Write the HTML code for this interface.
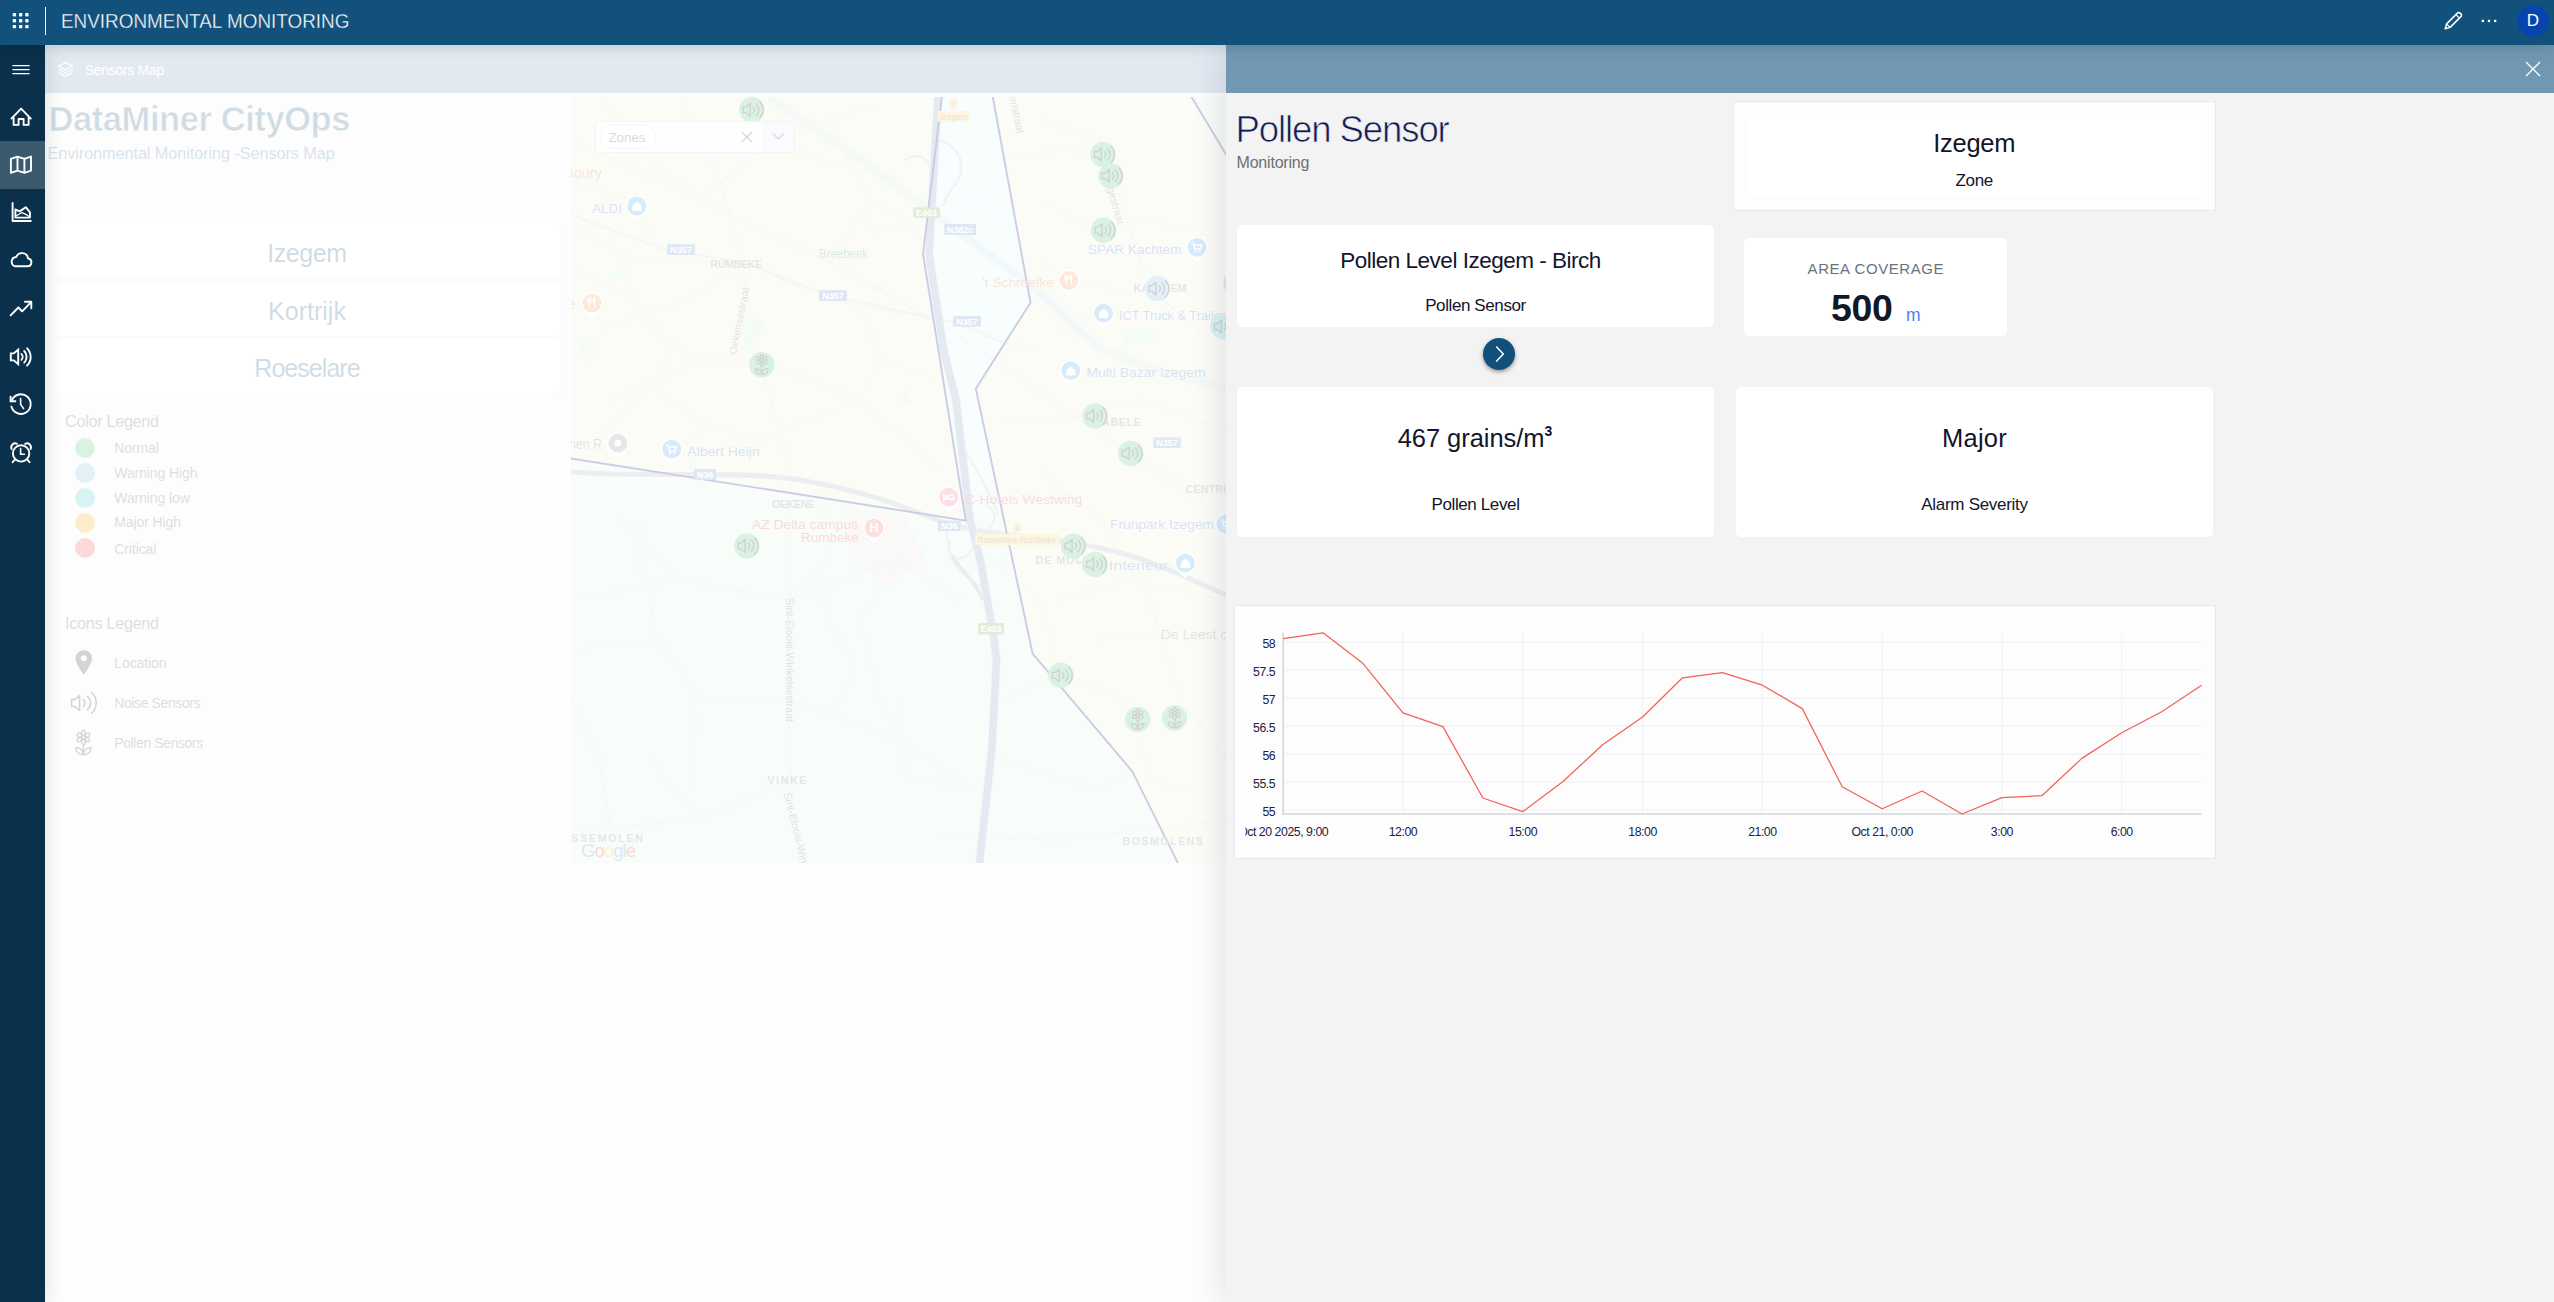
<!DOCTYPE html>
<html lang="en">
<head>
<meta charset="utf-8">
<title>Environmental Monitoring</title>
<style>
*{box-sizing:border-box}
html,body{margin:0;padding:0}
body{width:2554px;height:1302px;position:relative;overflow:hidden;background:#fff;font-family:"Liberation Sans",sans-serif;color:#14142b}
.abs{position:absolute}
/* top bar */
#topbar{position:absolute;left:0;top:0;width:2554px;height:45px;background:#11517c;z-index:50;box-shadow:0 0 15px rgba(0,0,0,.2)}
#topbar .sep{position:absolute;left:45px;top:7px;width:1px;height:28px;background:#fff}
#topbar .title{position:absolute;left:60.6px;top:0;height:45px;line-height:42.4px;font-size:20.3px;color:#fff;font-weight:400;letter-spacing:0;white-space:nowrap;transform:scaleX(.932);transform-origin:0 50%;-webkit-text-stroke:.35px #11517c}
#avatar{position:absolute;left:2517px;top:5px;width:32px;height:32px;border-radius:50%;background:#0645ad;color:#fff;font-size:17px;line-height:32px;text-align:center}
/* sidebar */
#sidebar{position:absolute;left:0;top:45px;width:45px;height:1257px;background:#0a304b;z-index:40;box-shadow:0 0 20px rgba(0,0,0,.125)}
#sidebar .sel{position:absolute;left:0;top:96px;width:45px;height:48px;background:#3c5a6e}
#sidebar svg{position:absolute;left:0;top:0}
/* page */
#page{position:absolute;left:45px;top:45px;width:2509px;height:1257px;background:#f6f6f6;z-index:1;overflow:hidden}
#veil{position:absolute;left:45px;top:45px;width:2509px;height:1257px;background:rgba(255,255,255,.8);z-index:10}
/* panel */
#panel{position:absolute;left:1226px;top:45px;width:1328px;height:1257px;background:#f3f3f4;z-index:20;box-shadow:-6px 0 28px rgba(20,40,70,.11)}
#panel .hdr{position:absolute;left:0;top:0;width:100%;height:48px;background:#7098b2}
.card{position:absolute;background:#fff;border-radius:5px}
.ctr{position:absolute;left:0;width:100%;text-align:center;white-space:nowrap}

.zb{position:absolute;left:9px;width:506px;height:54.5px;background:#fff;border-radius:4px;box-shadow:0 1px 3px rgba(0,0,0,.10);text-align:center;font-size:25px;line-height:58px;color:#11507b;letter-spacing:-.4px;white-space:nowrap}
.lg{font-size:16.3px;line-height:20px;color:#55555c;letter-spacing:-.33px;white-space:nowrap}
.li{left:69.3px;font-size:14px;line-height:20px;color:#55555c;letter-spacing:-.1px;white-space:nowrap}
.dot{position:absolute;left:30px;width:20px;height:20px;border-radius:50%}
</style>
</head>
<body>
<div id="page">
  <div class="abs" style="left:0;top:0;width:2509px;height:48px;background:#7391b9"></div>
  <svg class="abs" style="left:10px;top:14px" width="22" height="22" viewBox="0 0 22 22" fill="none" stroke="#fff" stroke-width="1.3" stroke-linejoin="round"><path d="M10.4 3.6 L17.6 7.2 L10.4 10.8 L3.2 7.2 Z"/><path d="M3.2 10.4 L10.4 14 L17.6 10.4"/><path d="M3.2 13.6 L10.4 17.2 L17.6 13.6"/></svg>
  <div class="abs" id="sm" style="left:39.7px;top:15.1px;font-size:14px;line-height:20px;color:#fff;letter-spacing:-.3px;white-space:nowrap">Sensors Map</div>

  <div class="abs" id="t1" style="left:3.5px;top:50.6px;font-size:34.5px;line-height:46px;font-weight:700;color:#11507b;letter-spacing:-.42px;-webkit-text-stroke:.55px #f6f6f6;white-space:nowrap">DataMiner CityOps</div>
  <div class="abs" id="t2" style="left:2.5px;top:98.1px;font-size:16.3px;line-height:20px;color:#3d6f96;letter-spacing:-.09px;white-space:nowrap">Environmental Monitoring -Sensors Map</div>

  <div class="zb" style="top:179.3px"><span id="zb1">Izegem</span></div>
  <div class="zb" style="top:236.8px"><span id="zb2" style="letter-spacing:0">Kortrijk</span></div>
  <div class="zb" style="top:294.4px"><span id="zb3" style="letter-spacing:-.95px">Roeselare</span></div>

  <!--MAP--><svg class="abs" style="left:526px;top:52px" width="700" height="766" viewBox="571 97 700 766" font-family="Liberation Sans, sans-serif">
<defs>
<g id="spk" fill="none" stroke="#1e1e1e" stroke-width="1.4" stroke-linecap="round" stroke-linejoin="round"><path d="M-9.6 -2.9 H-6.6 L-2.6 -6.4 V6.4 L-6.6 2.9 H-9.6 Z"/><path d="M0.6 -2.9 a4 4 0 0 1 0 5.8"/><path d="M3.6 -5.6 a7.7 7.7 0 0 1 0 11.2"/><path d="M6.8 -8.2 a11.4 11.4 0 0 1 0 16.4"/></g>
<g id="flr" fill="none" stroke="#1e1e1e" stroke-width="1.15" stroke-linecap="round" stroke-linejoin="round"><circle cx="0" cy="-4.6" r="1.6"/><ellipse cx="0" cy="-8.4" rx="1.6" ry="2.1"/><ellipse cx="0" cy="-0.8" rx="1.6" ry="2.1"/><ellipse cx="-3.3" cy="-6.5" rx="1.6" ry="2.1" transform="rotate(-60 -3.3 -6.5)"/><ellipse cx="3.3" cy="-6.5" rx="1.6" ry="2.1" transform="rotate(60 3.3 -6.5)"/><ellipse cx="-3.3" cy="-2.7" rx="1.6" ry="2.1" transform="rotate(60 -3.3 -2.7)"/><ellipse cx="3.3" cy="-2.7" rx="1.6" ry="2.1" transform="rotate(-60 3.3 -2.7)"/><path d="M0 1.4 V10"/><path d="M0 9.8 C-3.8 9.8 -6.2 7.4 -6.5 3.9 C-2.8 3.9 -.3 6.3 0 9.8 Z"/><path d="M0 9.8 C3.8 9.8 6.2 7.4 6.5 3.9 C2.8 3.9 .3 6.3 0 9.8 Z"/></g>
<g id="pin"><path d="M0 15.5 C-3 11 -10.8 7.5 -10.8 0 A10.8 10.8 0 1 1 10.8 0 C10.8 7.5 3 11 0 15.5 Z" fill="#fff"/></g>
</defs>
<rect x="571" y="97" width="700" height="766" fill="#ddf2e4"/>
<polygon points="935,97 1000,97 1032,302 976,389 1000,520 960,520 922,254" fill="#dcf5f3"/>
<polygon points="400,0 953.6,0 923,254 965.7,520.6 400,431.6" fill="#eef0d6"/>
<polygon points="975,0 1133,0 1191.5,97 1225.8,153.9 1400,443 1400,1000 1246,1000 1177.7,862.7 1132.2,771.2 1032.6,653.5 975.8,388.7 1030.5,302.6" fill="#eef0d6"/>
<polygon points="1191.5,97 1271,97 1271,230 1225.8,153.9" fill="#dcefe0"/>
<path d="M845 507 L905 515 L925 560 L890 585 L850 560 Z" fill="#f7d2d2" opacity=".55"/>
<path d="M578 345 l14 -8 l8 14 l-16 10 z" fill="#bfe6c4" opacity=".7"/>
<path d="M608 272 h16 v8 h-16 z" fill="#bfe6c4" opacity=".7"/>
<path d="M745 315 l20 8 l-8 18 l-14 -6 z" fill="#bfe6c4" opacity=".7"/>
<path d="M742 338 l10 -2 l6 16 l-10 4 z" fill="#bfe6c4" opacity=".7"/>
<path d="M870 285 l8 -4 l6 8 l-8 6 z" fill="#bfe6c4" opacity=".7"/>
<path d="M896 395 l10 -4 l6 12 l-12 4 z" fill="#bfe6c4" opacity=".7"/>
<path d="M1120 330 h30 l10 14 h-36 z" fill="#bfe6c4" opacity=".7"/>
<path d="M769 97 L889 180 L928 210 L1027 282 L1099 348 L1160 372 L1271 400" fill="none" stroke="#c9e4d2" stroke-width="9" opacity=".8"/>
<path d="M935 214 L1027 282 L1099 348" fill="none" stroke="#a9def0" stroke-width="4.5" opacity=".8"/>
<path d="M706 190 C730 180 745 160 760 150 S800 150 820 160 S850 150 870 160" fill="none" stroke="#bfe6ee" stroke-width="1.3" opacity=".9"/>
<path d="M860 215 L875 232 L905 222 L915 236 L925 240" fill="none" stroke="#bfe6ee" stroke-width="1.3" opacity=".9"/>
<path d="M571 268 C600 280 640 300 660 330 S650 400 600 430" fill="none" stroke="#bfe6ee" stroke-width="1.3" opacity=".9"/>
<path d="M940 150 C950 180 960 200 985 205 S1010 230 1020 260" fill="none" stroke="#bfe6ee" stroke-width="1.3" opacity=".9"/>
<path d="M640 520 C650 540 630 560 645 580 S640 640 670 660 S700 720 690 790" fill="none" stroke="#bfe6ee" stroke-width="1.3" opacity=".9"/>
<path d="M810 570 C830 590 820 620 840 640 S850 690 830 720" fill="none" stroke="#bfe6ee" stroke-width="1.3" opacity=".9"/>
<path d="M900 700 L905 780 L960 785" fill="none" stroke="#bfe6ee" stroke-width="1.3" opacity=".9"/>
<path d="M571 140 L700 200 L830 262 L950 330 L1080 420 L1226 520" fill="none" stroke="#d2d8d2" stroke-width="1.6" opacity=".75"/>
<path d="M680 97 L720 180 L742 262 L760 360 L790 470 L789 600 L789 760 L800 862" fill="none" stroke="#d2d8d2" stroke-width="1.6" opacity=".75"/>
<path d="M571 225 L640 262 L742 262" fill="none" stroke="#d2d8d2" stroke-width="1.6" opacity=".75"/>
<path d="M742 262 L830 300 L953 322 L1040 350" fill="none" stroke="#d2d8d2" stroke-width="1.6" opacity=".75"/>
<path d="M600 330 L690 300 L742 262" fill="none" stroke="#d2d8d2" stroke-width="1.6" opacity=".75"/>
<path d="M610 400 L700 360 L760 360 L860 400 L940 470" fill="none" stroke="#d2d8d2" stroke-width="1.6" opacity=".75"/>
<path d="M571 600 L680 580 L789 600 L900 560 L960 600" fill="none" stroke="#d2d8d2" stroke-width="1.6" opacity=".75"/>
<path d="M789 700 L900 740 L990 800" fill="none" stroke="#d2d8d2" stroke-width="1.6" opacity=".75"/>
<path d="M789 780 L700 820 L571 830" fill="none" stroke="#d2d8d2" stroke-width="1.6" opacity=".75"/>
<path d="M1040 120 L1100 140 L1120 200 L1150 290 L1200 330" fill="none" stroke="#d2d8d2" stroke-width="1.6" opacity=".75"/>
<path d="M1000 160 L1060 150 L1103 154" fill="none" stroke="#d2d8d2" stroke-width="1.6" opacity=".75"/>
<path d="M1060 420 L1140 400 L1226 430" fill="none" stroke="#d2d8d2" stroke-width="1.6" opacity=".75"/>
<path d="M1040 470 L1100 520 L1150 600 L1180 700 L1226 760" fill="none" stroke="#d2d8d2" stroke-width="1.6" opacity=".75"/>
<path d="M1060 600 L1130 580 L1226 600" fill="none" stroke="#d2d8d2" stroke-width="1.6" opacity=".75"/>
<path d="M1000 700 L1060 675 L1130 700" fill="none" stroke="#d2d8d2" stroke-width="1.6" opacity=".75"/>
<path d="M940 836 L1060 840 L1226 820" fill="none" stroke="#d2d8d2" stroke-width="1.6" opacity=".75"/>
<path d="M571 700 L600 760 L615 862" fill="none" stroke="#d2d8d2" stroke-width="1.6" opacity=".75"/>
<path d="M600 97 L640 150 L700 200" fill="none" stroke="#d6dbd6" stroke-width="1.2" opacity=".6"/>
<path d="M571 180 L630 200 L660 250" fill="none" stroke="#d6dbd6" stroke-width="1.2" opacity=".6"/>
<path d="M620 262 L650 330 L700 360" fill="none" stroke="#d6dbd6" stroke-width="1.2" opacity=".6"/>
<path d="M700 200 L760 150 L830 120 L900 97" fill="none" stroke="#d6dbd6" stroke-width="1.2" opacity=".6"/>
<path d="M830 120 L870 200 L830 262" fill="none" stroke="#d6dbd6" stroke-width="1.2" opacity=".6"/>
<path d="M870 200 L923 230" fill="none" stroke="#d6dbd6" stroke-width="1.2" opacity=".6"/>
<path d="M640 380 L700 420 L760 440 L860 400" fill="none" stroke="#d6dbd6" stroke-width="1.2" opacity=".6"/>
<path d="M700 420 L690 470" fill="none" stroke="#d6dbd6" stroke-width="1.2" opacity=".6"/>
<path d="M860 300 L880 360 L860 400" fill="none" stroke="#d6dbd6" stroke-width="1.2" opacity=".6"/>
<path d="M880 360 L940 380" fill="none" stroke="#d6dbd6" stroke-width="1.2" opacity=".6"/>
<path d="M1040 200 L1100 230 L1150 220 L1226 240" fill="none" stroke="#d6dbd6" stroke-width="1.2" opacity=".6"/>
<path d="M1040 260 L1069 280 L1120 290 L1157 288" fill="none" stroke="#d6dbd6" stroke-width="1.2" opacity=".6"/>
<path d="M1060 330 L1103 313" fill="none" stroke="#d6dbd6" stroke-width="1.2" opacity=".6"/>
<path d="M1000 420 L1060 420 L1095 416" fill="none" stroke="#d6dbd6" stroke-width="1.2" opacity=".6"/>
<path d="M1131 453 L1180 480 L1226 490" fill="none" stroke="#d6dbd6" stroke-width="1.2" opacity=".6"/>
<path d="M1000 560 L1040 600 L1060 675" fill="none" stroke="#d6dbd6" stroke-width="1.2" opacity=".6"/>
<path d="M1100 640 L1160 634 L1226 650" fill="none" stroke="#d6dbd6" stroke-width="1.2" opacity=".6"/>
<path d="M1130 700 L1150 780 L1226 800" fill="none" stroke="#d6dbd6" stroke-width="1.2" opacity=".6"/>
<path d="M620 520 L680 580" fill="none" stroke="#d6dbd6" stroke-width="1.2" opacity=".6"/>
<path d="M571 650 L660 640 L700 700 L789 700" fill="none" stroke="#d6dbd6" stroke-width="1.2" opacity=".6"/>
<path d="M860 620 L900 560" fill="none" stroke="#d6dbd6" stroke-width="1.2" opacity=".6"/>
<path d="M860 620 L880 700 L900 740" fill="none" stroke="#d6dbd6" stroke-width="1.2" opacity=".6"/>
<path d="M650 760 L700 820" fill="none" stroke="#d6dbd6" stroke-width="1.2" opacity=".6"/>
<path d="M1000 760 L1100 790 L1132 771" fill="none" stroke="#d6dbd6" stroke-width="1.2" opacity=".6"/>
<path d="M820 480 L830 560 L789 600" fill="none" stroke="#d6dbd6" stroke-width="1.2" opacity=".6"/>
<path d="M571 472 C640 478 740 470 800 480 S900 505 937 520 S1040 535 1100 548 S1190 580 1271 615" fill="none" stroke="#9fb0b8" stroke-width="5"/>
<path d="M571 215 L667 250 L742 262 L830 296 L953 322 L1010 345" fill="none" stroke="#c6d0cc" stroke-width="2.6" opacity=".8"/>
<path d="M940 140 C965 150 965 172 955 185 S945 200 943 206" fill="none" stroke="#b7c0cc" stroke-width="2.6"/>
<path d="M905 160 C920 150 935 160 932 190" fill="none" stroke="#b7c0cc" stroke-width="2.6"/>
<path d="M950 540 C945 560 965 565 972 548 M947 528 C945 560 960 575 985 590" fill="none" stroke="#b7c0cc" stroke-width="2.4"/>
<path d="M960 440 C975 470 990 490 998 515 M985 505 C1000 510 995 528 985 530" fill="none" stroke="#b7c0cc" stroke-width="2.2"/>
<path d="M938 97 L929 254 L944 352 L956 400 L970 520 L980.3 560 L987.3 600 L994 640 L996.5 660 L992 747 L979.5 863" fill="none" stroke="#bfe3f3" stroke-width="9.4" stroke-linejoin="round"/>
<path d="M952 556 C962 572 975 580 983 600" fill="none" stroke="#8fa3c2" stroke-width="3.4"/>
<path d="M938 97 L929 254 L944 352 L956 400 L970 520 L980.3 560 L987.3 600 L994 640 L996.5 660 L992 747 L979.5 863" fill="none" stroke="#7d94b8" stroke-width="7.4" stroke-linejoin="round"/>
<polygon points="400,0 953.6,0 923,254 965.7,520.6 400,431.6" fill="none" stroke="#00007a" stroke-width="1.9" stroke-linejoin="miter"/>
<polygon points="975,0 1133,0 1191.5,97 1225.8,153.9 1400,443 1400,1000 1246,1000 1177.7,862.7 1132.2,771.2 1032.6,653.5 975.8,388.7 1030.5,302.6" fill="none" stroke="#00007a" stroke-width="1.9" stroke-linejoin="miter"/>
<rect x="667" y="244.3" width="28.0" height="10.6" fill="#5f86c9"/>
<text x="681.0" y="252.8" font-size="9" font-weight="700" fill="#fff" text-anchor="middle">N357</text>
<rect x="819" y="290.2" width="27.9" height="10.6" fill="#5f86c9"/>
<text x="833.0" y="298.7" font-size="9" font-weight="700" fill="#fff" text-anchor="middle">N357</text>
<rect x="953" y="316" width="28.0" height="10.6" fill="#5f86c9"/>
<text x="967.0" y="324.5" font-size="9" font-weight="700" fill="#fff" text-anchor="middle">N357</text>
<rect x="1153.2" y="437.5" width="27.5" height="10.5" fill="#5f86c9"/>
<text x="1167.0" y="445.9" font-size="9" font-weight="700" fill="#fff" text-anchor="middle">N357</text>
<rect x="944.3" y="224" width="31.6" height="11.0" fill="#5f86c9"/>
<text x="960.1" y="232.7" font-size="9" font-weight="700" fill="#fff" text-anchor="middle">N382c</text>
<rect x="938" y="520.6" width="22.6" height="10.4" fill="#5f86c9"/>
<text x="949.3" y="529.0" font-size="9" font-weight="700" fill="#fff" text-anchor="middle">N36</text>
<rect x="694" y="469" width="22.0" height="11.0" fill="#5f86c9"/>
<text x="705.0" y="477.7" font-size="9" font-weight="700" fill="#fff" text-anchor="middle">N36</text>
<rect x="913" y="207.4" width="27.0" height="10.4" fill="#6da544"/>
<text x="926.5" y="215.8" font-size="9" font-weight="700" fill="#fff" text-anchor="middle">E403</text>
<rect x="978" y="623" width="26.0" height="11.4" fill="#6da544"/>
<text x="991.0" y="631.9" font-size="9" font-weight="700" fill="#fff" text-anchor="middle">E403</text>
<rect x="949" y="99" width="8.5" height="11.0" fill="#f6d36b"/>
<text x="953.2" y="107.7" font-size="8" font-weight="400" fill="#8a6d1a" text-anchor="middle">7</text>
<rect x="938" y="111" width="32.0" height="10.5" fill="#f6d36b"/>
<text x="954.0" y="119.5" font-size="8.6" font-weight="400" fill="#8a6d1a" text-anchor="middle">Izegem</text>
<rect x="1013.3" y="522.5" width="8.3" height="9.5" fill="#f6d36b"/>
<text x="1017.5" y="530.5" font-size="8" font-weight="400" fill="#8a6d1a" text-anchor="middle">6</text>
<rect x="975" y="533.7" width="84.0" height="11.3" fill="#f6d36b"/>
<text x="1017.0" y="542.6" font-size="8.6" font-weight="400" fill="#8a6d1a" text-anchor="middle">Roeselare-Rumbeke</text>
<text x="710.3" y="267.8" font-size="10.8" font-weight="700" fill="#7d838a" textLength="51.9" lengthAdjust="spacing">RUMBEKE</text>
<text x="1133.6" y="292.4" font-size="10.8" font-weight="700" fill="#7d838a" textLength="52.9" lengthAdjust="spacing">KACHTEM</text>
<text x="1102" y="425.8" font-size="10.8" font-weight="700" fill="#7d838a" textLength="39.0" lengthAdjust="spacing">ABELE</text>
<text x="1185.4" y="492.8" font-size="10.8" font-weight="700" fill="#7d838a" textLength="54.6" lengthAdjust="spacing">CENTRUM</text>
<text x="772" y="507.6" font-size="10.8" font-weight="700" fill="#7d838a" textLength="43.0" lengthAdjust="spacing">OEKENE</text>
<text x="1035.6" y="563.8" font-size="10.8" font-weight="700" fill="#7d838a" textLength="54.4" lengthAdjust="spacing">DE&#160;MOLE</text>
<text x="767.4" y="783.6" font-size="10.8" font-weight="700" fill="#7d838a" textLength="39.1" lengthAdjust="spacing">VINKE</text>
<text x="552" y="841.7" font-size="10.8" font-weight="700" fill="#7d838a" textLength="91.0" lengthAdjust="spacing">ROSSEMOLEN</text>
<text x="1122.4" y="845.0" font-size="10.8" font-weight="700" fill="#7d838a" textLength="80.6" lengthAdjust="spacing">BOSMOLENS</text>
<text transform="translate(742.6 321.6) rotate(-78.7)" font-size="10.5" fill="#6a6a6a" text-anchor="middle">Oekensestraat</text>
<text transform="translate(1017.2 134) rotate(78)" font-size="10.6" fill="#6a6a6a" text-anchor="end">Bloemstraat</text>
<text transform="translate(1117.6 225) rotate(74)" font-size="10.6" fill="#6a6a6a" text-anchor="end">Hogestraat</text>
<text transform="translate(785.5 660) rotate(90)" font-size="10.6" fill="#6a6a6a" text-anchor="middle">Sint-Eloois-Winkelsestraat</text>
<text transform="translate(783.6 793.5) rotate(76)" font-size="10.6" fill="#6a6a6a" text-anchor="start">Sint-Eloois-Winkelsestraat</text>
<g transform="translate(636.9 206)"><use href="#pin"/><circle r="9.4" fill="#3d9be9"/>
<path d="M-3.6 -1.6 h7.2 l1 6 h-9.2 z M-1.8 -1.6 a1.8 2.2 0 0 1 3.6 0" fill="#fff" stroke="#fff" stroke-width=".8" fill-rule="evenodd"/>
</g>
<g transform="translate(592 302.8)"><use href="#pin"/><circle r="9.4" fill="#f88c45"/>
<path d="M-2.6 -5 v4 M-4.2 -5 v3 a1.6 1.6 0 0 0 3.2 0 v-3 M-2.6 -1 v6 M2.6 -5 c-2 1.5 -2 4.5 0 5.5 v4.5 M2.6 -5 v10" fill="none" stroke="#fff" stroke-width="1.25"/>
</g>
<g transform="translate(1068.9 280.3)"><use href="#pin"/><circle r="9.4" fill="#f88c45"/>
<path d="M-2.6 -5 v4 M-4.2 -5 v3 a1.6 1.6 0 0 0 3.2 0 v-3 M-2.6 -1 v6 M2.6 -5 c-2 1.5 -2 4.5 0 5.5 v4.5 M2.6 -5 v10" fill="none" stroke="#fff" stroke-width="1.25"/>
</g>
<g transform="translate(1197 247.3)"><use href="#pin"/><circle r="9.4" fill="#3d9be9"/>
<path d="M-5.4 -3.8 h1.8 l1.4 5.6 h5.4 l1.4 -4 h-7.4" fill="none" stroke="#fff" stroke-width="1.5"/><circle cx="-1.6" cy="4" r="1.1" fill="#fff"/><circle cx="2.8" cy="4" r="1.1" fill="#fff"/>
</g>
<g transform="translate(1103.6 313.2)"><use href="#pin"/><circle r="9.4" fill="#3d9be9"/>
<path d="M-3.6 -1.6 h7.2 l1 6 h-9.2 z M-1.8 -1.6 a1.8 2.2 0 0 1 3.6 0" fill="#fff" stroke="#fff" stroke-width=".8" fill-rule="evenodd"/>
</g>
<g transform="translate(1070.8 370.7)"><use href="#pin"/><circle r="9.4" fill="#3d9be9"/>
<path d="M-3.6 -1.6 h7.2 l1 6 h-9.2 z M-1.8 -1.6 a1.8 2.2 0 0 1 3.6 0" fill="#fff" stroke="#fff" stroke-width=".8" fill-rule="evenodd"/>
</g>
<g transform="translate(617.9 443.2)"><use href="#pin"/><circle r="9.4" fill="#7b8d86"/>
<circle r="3.4" fill="#fff"/>
</g>
<g transform="translate(671.8 449.2)"><use href="#pin"/><circle r="9.4" fill="#3d9be9"/>
<path d="M-5.4 -3.8 h1.8 l1.4 5.6 h5.4 l1.4 -4 h-7.4" fill="none" stroke="#fff" stroke-width="1.5"/><circle cx="-1.6" cy="4" r="1.1" fill="#fff"/><circle cx="2.8" cy="4" r="1.1" fill="#fff"/>
</g>
<g transform="translate(948.8 497.1)"><use href="#pin"/><circle r="9.4" fill="#f06292"/>
<path d="M-5 -3.4 v7 M-5 1.6 h10 v2 M5 1.6 v-2 a1.6 1.6 0 0 0 -1.6 -1.6 h-4 v3.4" fill="none" stroke="#fff" stroke-width="1.4"/><circle cx="-2.9" cy="-.8" r="1.1" fill="#fff"/>
</g>
<g transform="translate(874.1 527.8)"><use href="#pin"/><circle r="9.4" fill="#ee675c"/>
<text x="0" y="4.4" font-size="12.5" font-weight="700" fill="#fff" text-anchor="middle">H</text>
</g>
<g transform="translate(1185.4 563.1)"><use href="#pin"/><circle r="9.4" fill="#3d9be9"/>
<path d="M-3.6 -1.6 h7.2 l1 6 h-9.2 z M-1.8 -1.6 a1.8 2.2 0 0 1 3.6 0" fill="#fff" stroke="#fff" stroke-width=".8" fill-rule="evenodd"/>
</g>
<g transform="translate(1226 524)"><use href="#pin"/><circle r="9.4" fill="#3d9be9"/>
<path d="M-5.4 -3.8 h1.8 l1.4 5.6 h5.4 l1.4 -4 h-7.4" fill="none" stroke="#fff" stroke-width="1.5"/><circle cx="-1.6" cy="4" r="1.1" fill="#fff"/><circle cx="2.8" cy="4" r="1.1" fill="#fff"/>
</g>
<text x="592" y="212.8" font-size="13.6" fill="#3f6fd0" textLength="30.0" lengthAdjust="spacingAndGlyphs">ALDI</text>
<text x="687.2" y="456.3" font-size="13.6" fill="#3f6fd0" textLength="72.5" lengthAdjust="spacingAndGlyphs">Albert Heijn</text>
<text x="1088" y="253.8" font-size="13.6" fill="#3f6fd0" textLength="93.5" lengthAdjust="spacingAndGlyphs">SPAR Kachtem</text>
<text x="1119" y="319.8" font-size="13.6" fill="#3f6fd0" textLength="152.0" lengthAdjust="spacingAndGlyphs">ICT Truck &amp; Trailer Service</text>
<text x="1086.4" y="377.3" font-size="13.6" fill="#3f6fd0" textLength="119.2" lengthAdjust="spacingAndGlyphs">Multi Bazar Izegem</text>
<text x="1110" y="529.2" font-size="13.6" fill="#3f6fd0" textLength="104.0" lengthAdjust="spacingAndGlyphs">Frunpark Izegem</text>
<text x="1078" y="570.1" font-size="13.6" fill="#3f6fd0" textLength="90.5" lengthAdjust="spacingAndGlyphs">Top Interieur</text>
<text x="981.8" y="286.8" font-size="13.6" fill="#e07a3a" textLength="72.2" lengthAdjust="spacingAndGlyphs">&#8217;t Schroefke</text>
<text x="965" y="503.8" font-size="13.6" fill="#d9407f" textLength="117.3" lengthAdjust="spacingAndGlyphs">C-Hotels Westwing</text>
<text x="752" y="528.6" font-size="13.6" fill="#e0453a" textLength="106.0" lengthAdjust="spacingAndGlyphs">AZ Delta campus</text>
<text x="801" y="541.8" font-size="13.6" fill="#e0453a" textLength="57.7" lengthAdjust="spacingAndGlyphs">Rumbeke</text>
<text x="1160.8" y="639.2" font-size="13.6" fill="#5f7a78" textLength="101.2" lengthAdjust="spacingAndGlyphs">De Leest cultuur</text>
<text x="819.1" y="257.8" font-size="12.6" fill="#3f9c80" textLength="48.9" lengthAdjust="spacingAndGlyphs">Breebeek</text>
<text x="560" y="178.2" font-size="14" fill="#e07a3a" textLength="42.0" lengthAdjust="spacingAndGlyphs">&#160;Boury</text>
<text x="540" y="448.8" font-size="14" fill="#5f7a78" textLength="62.0" lengthAdjust="spacingAndGlyphs">Pottenen R</text>
<text x="561" y="308.8" font-size="14" fill="#e07a3a" textLength="15.0" lengthAdjust="spacingAndGlyphs">te</text>
<circle cx="751.8" cy="109.8" r="12.7" fill="#41be73"/><use href="#spk" x="752.8" y="109.8"/>
<circle cx="1103" cy="154.5" r="12.7" fill="#41be73"/><use href="#spk" x="1104" y="154.5"/>
<circle cx="1110.8" cy="175.9" r="12.7" fill="#41be73"/><use href="#spk" x="1111.8" y="175.9"/>
<circle cx="1103.6" cy="230.2" r="12.7" fill="#41be73"/><use href="#spk" x="1104.6" y="230.2"/>
<circle cx="1095.3" cy="416" r="12.7" fill="#41be73"/><use href="#spk" x="1096.3" y="416"/>
<circle cx="1130.7" cy="453.4" r="12.7" fill="#41be73"/><use href="#spk" x="1131.7" y="453.4"/>
<circle cx="746.8" cy="545.9" r="12.7" fill="#41be73"/><use href="#spk" x="747.8" y="545.9"/>
<circle cx="1073.6" cy="546" r="12.7" fill="#41be73"/><use href="#spk" x="1074.6" y="546"/>
<circle cx="1095.1" cy="564.4" r="12.7" fill="#41be73"/><use href="#spk" x="1096.1" y="564.4"/>
<circle cx="1060.9" cy="675.3" r="12.7" fill="#41be73"/><use href="#spk" x="1061.9" y="675.3"/>
<circle cx="1236" cy="282.7" r="12.7" fill="#41be73"/><use href="#spk" x="1237" y="282.7"/>
<circle cx="1157.5" cy="288.6" r="12.7" fill="#78b4dc"/><use href="#spk" x="1158.5" y="288.6"/>
<circle cx="1223" cy="326.6" r="12.7" fill="#41c3c8"/><use href="#spk" x="1224" y="326.6"/>
<circle cx="761.8" cy="364.7" r="12.7" fill="#41be73"/><use href="#flr" x="761.8" y="364.7"/>
<circle cx="1137.7" cy="719.5" r="12.7" fill="#41be73"/><use href="#flr" x="1137.7" y="719.5"/>
<circle cx="1174.6" cy="718" r="12.7" fill="#41be73"/><use href="#flr" x="1174.6" y="718"/>
<text x="581" y="857.4" font-size="18.6" letter-spacing="-1"><tspan fill="#4285f4">G</tspan><tspan fill="#ea4335">o</tspan><tspan fill="#fbbc05">o</tspan><tspan fill="#4285f4">g</tspan><tspan fill="#34a853">l</tspan><tspan fill="#ea4335">e</tspan></text>
<rect x="595.5" y="121.5" width="199" height="31" rx="2" fill="#fafafa" stroke="#c8c8d8" stroke-width="1"/>
<rect x="762" y="122" width="32" height="30" fill="#ebebf3"/>
<rect x="599.6" y="125" width="56.4" height="23.5" rx="11.75" fill="#fff" stroke="#c5cad6" stroke-width="1"/>
<text x="608.4" y="141.9" font-size="13.2" fill="#3a3a55" textLength="37" lengthAdjust="spacingAndGlyphs">Zones</text>
<path d="M741.8 132 L752 142.2 M752 132 L741.8 142.2" stroke="#1a1a4a" stroke-width="1.1" fill="none"/>
<path d="M773 133.6 L778.3 139 L783.6 133.6" stroke="#1f3fbf" stroke-width="1.3" fill="none"/>
</svg><!--/MAP-->
  <div class="abs lg" id="lg1" style="left:20px;top:366px">Color Legend</div>
  <div class="dot" style="top:393.2px;background:#41be73"></div><div class="abs li" id="l1" style="top:393.4px">Normal</div>
  <div class="dot" style="top:418px;background:#78b4dc"></div><div class="abs li" id="l2" style="top:418.2px">Warning High</div>
  <div class="dot" style="top:443.1px;background:#41c3c8"></div><div class="abs li" id="l3" style="top:443.4px">Warning low</div>
  <div class="dot" style="top:467.9px;background:#f7a400"></div><div class="abs li" id="l4" style="top:467.3px">Major High</div>
  <div class="dot" style="top:493.3px;background:#f54141"></div><div class="abs li" id="l5" style="top:494.2px">Critical</div>

  <div class="abs lg" id="lg2" style="left:20px;top:568px">Icons Legend</div>
  <svg class="abs" style="left:28px;top:603px" width="22" height="30" viewBox="0 0 22 30"><path d="M10.8 2.2 C6.2 2.2 2.6 5.7 2.6 10.2 C2.6 16 10.8 26.8 10.8 26.8 C10.8 26.8 19 16 19 10.2 C19 5.7 15.4 2.2 10.8 2.2 Z M10.8 7.2 a3 3 0 1 1 0 6 a3 3 0 0 1 0 -6 Z" fill="#2a2a2a" fill-rule="evenodd"/></svg>
  <div class="abs li" id="l6" style="top:608px">Location</div>
  <svg class="abs" style="left:24px;top:645px" width="32" height="26" viewBox="0 0 32 26" fill="none" stroke="#2a2a2a" stroke-width="1.5" stroke-linecap="round" stroke-linejoin="round"><path d="M2.6 9.4 H6.2 L10.6 5.4 V20.6 L6.2 16.6 H2.6 Z"/><path d="M14.4 9.6 a4.6 4.6 0 0 1 0 6.8"/><path d="M18.4 6.2 a9 9 0 0 1 0 13.6"/><path d="M22.6 2.8 a13.6 13.6 0 0 1 0 20.4"/></svg>
  <div class="abs li" id="l7" style="top:648px;letter-spacing:-.4px">Noise Sensors</div>
  <svg class="abs" style="left:28px;top:684px" width="22" height="28" viewBox="0 0 22 28" fill="none" stroke="#2a2a2a" stroke-width="1.3" stroke-linecap="round" stroke-linejoin="round"><g id="flw"><circle cx="10.4" cy="8.4" r="1.9"/><ellipse cx="10.4" cy="3.9" rx="1.9" ry="2.5"/><ellipse cx="10.4" cy="12.9" rx="1.9" ry="2.5"/><ellipse cx="6.5" cy="6.15" rx="1.9" ry="2.5" transform="rotate(-60 6.5 6.15)"/><ellipse cx="14.3" cy="6.15" rx="1.9" ry="2.5" transform="rotate(60 14.3 6.15)"/><ellipse cx="6.5" cy="10.65" rx="1.9" ry="2.5" transform="rotate(60 6.5 10.65)"/><ellipse cx="14.3" cy="10.65" rx="1.9" ry="2.5" transform="rotate(-60 14.3 10.65)"/><path d="M10.4 15.4 V26"/><path d="M10.4 25.6 C6 25.6 3 22.8 2.6 18.6 C7 18.6 10 21.4 10.4 25.6 Z"/><path d="M10.4 25.6 C14.8 25.6 17.8 22.8 18.2 18.6 C13.8 18.6 10.8 21.4 10.4 25.6 Z"/></g></svg>
  <div class="abs li" id="l8" style="top:688px;letter-spacing:-.4px">Pollen Sensors</div>
</div>
<div id="veil"></div>

<div id="panel">
  <div class="hdr"></div>

  <div class="abs" id="pt" style="left:9.5px;top:60px;font-size:36.6px;line-height:50px;color:#141c55;letter-spacing:-1.12px;-webkit-text-stroke:.7px #f3f3f4;white-space:nowrap">Pollen Sensor</div>
  <div class="abs" id="pm" style="left:10.5px;top:107.6px;font-size:16px;line-height:20px;color:#6f6f74;letter-spacing:-.2px;white-space:nowrap">Monitoring</div>

  <div class="abs" style="left:507px;top:56px;width:482.7px;height:109.5px;background:#fdfdfd;border:1px solid #e8e9ee"></div>
  <div class="card" style="left:520.5px;top:69.3px;width:455.5px;height:83px">
    <div class="ctr" id="z1" style="top:12px;font-size:25.5px;line-height:34px;letter-spacing:-.3px">Izegem</div>
    <div class="ctr" id="z2" style="top:56.2px;font-size:17px;line-height:22px;letter-spacing:-.3px">Zone</div>
  </div>

  <div class="card" style="left:11px;top:180px;width:477px;height:102px">
    <div class="ctr" id="c1a" style="top:21.3px;left:-5px;font-size:22.5px;line-height:30px;letter-spacing:-.5px">Pollen Level Izegem - Birch</div>
    <div class="ctr" id="c1b" style="top:70.2px;font-size:17px;line-height:22px;letter-spacing:-.4px">Pollen Sensor</div>
  </div>

  <div class="card" style="left:518px;top:193px;width:263px;height:98px;border-radius:5px">
    <div class="ctr" id="ac" style="top:22.2px;left:.3px;font-size:15px;line-height:18px;color:#6b7280;letter-spacing:.55px">AREA COVERAGE</div>
    <div class="abs" id="n500" style="left:87px;top:48px;font-size:37.5px;line-height:44px;font-weight:700;color:#111827;letter-spacing:-.4px">500</div>
    <div class="abs" id="um" style="left:162px;top:66.5px;font-size:17.5px;line-height:20px;color:#4f7df3">m</div>
  </div>

  <div class="abs" style="left:257px;top:293px;width:32px;height:32px;border-radius:50%;background:#11507b;box-shadow:0 2px 4px rgba(0,0,0,.38)">
    <svg width="32" height="32" viewBox="0 0 32 32" style="display:block"><path d="M13.2 8.6 L20.3 16 L13.2 23.4" fill="none" stroke="#fff" stroke-width="1.5"/></svg>
  </div>

  <div class="card" style="left:11px;top:342px;width:477px;height:150px">
    <div class="ctr" id="c2a" style="top:34px;left:-.5px;font-size:25.5px;line-height:34px;letter-spacing:-.05px">467 grains/m<span style="font-size:14px;position:relative;top:-11px;font-weight:700;letter-spacing:0">3</span></div>
    <div class="ctr" id="c2b" style="top:107.2px;font-size:17px;line-height:22px;letter-spacing:-.38px">Pollen Level</div>
  </div>
  <div class="card" style="left:510px;top:342px;width:477px;height:150px">
    <div class="ctr" id="c3a" style="top:34px;font-size:25.5px;line-height:34px;letter-spacing:.2px">Major</div>
    <div class="ctr" id="c3b" style="top:107px;font-size:17px;line-height:22px;letter-spacing:-.3px">Alarm Severity</div>
  </div>

  <div class="abs" style="left:8.2px;top:560px;width:981.5px;height:253.5px;background:#fdfdfd;border:1px solid #e6e8eb"></div>
  <svg class="abs" style="left:0;top:0" width="1000" height="830" viewBox="0 0 1000 830" font-family="Liberation Sans, sans-serif">
<defs><clipPath id="cx"><rect x="19.4" y="770" width="975" height="40"/></clipPath></defs>
<line x1="57" x2="975.5" y1="597" y2="597" stroke="#f1f3f4" stroke-width="1.3"/>
<line x1="57" x2="975.5" y1="625" y2="625" stroke="#f1f3f4" stroke-width="1.3"/>
<line x1="57" x2="975.5" y1="653" y2="653" stroke="#f1f3f4" stroke-width="1.3"/>
<line x1="57" x2="975.5" y1="681" y2="681" stroke="#f1f3f4" stroke-width="1.3"/>
<line x1="57" x2="975.5" y1="709" y2="709" stroke="#f1f3f4" stroke-width="1.3"/>
<line x1="57" x2="975.5" y1="737" y2="737" stroke="#f1f3f4" stroke-width="1.3"/>
<line x1="57" x2="975.5" y1="765" y2="765" stroke="#f1f3f4" stroke-width="1.3"/>
<line x1="177.0" x2="177.0" y1="588" y2="769" stroke="#f1f3f4" stroke-width="1.3"/>
<line x1="296.8" x2="296.8" y1="588" y2="769" stroke="#f1f3f4" stroke-width="1.3"/>
<line x1="416.6" x2="416.6" y1="588" y2="769" stroke="#f1f3f4" stroke-width="1.3"/>
<line x1="536.4" x2="536.4" y1="588" y2="769" stroke="#f1f3f4" stroke-width="1.3"/>
<line x1="656.2" x2="656.2" y1="588" y2="769" stroke="#f1f3f4" stroke-width="1.3"/>
<line x1="775.9" x2="775.9" y1="588" y2="769" stroke="#f1f3f4" stroke-width="1.3"/>
<line x1="895.7" x2="895.7" y1="588" y2="769" stroke="#f1f3f4" stroke-width="1.3"/>
<line x1="57.2" x2="57.2" y1="587.5" y2="770" stroke="#d3d7db" stroke-width="1.6"/>
<line x1="56.4" x2="975.5" y1="769" y2="769" stroke="#d3d7db" stroke-width="1.6"/>
<polyline fill="none" stroke="#f4605a" stroke-width="1.25" stroke-linejoin="round" points="57.2,593.7 97.1,587.8 137.1,618.6 177.0,667.8 216.9,681.6 256.9,753.0 296.8,766.7 336.7,736.8 376.6,699.8 416.6,672.0 456.5,632.8 496.4,627.7 536.4,640.2 576.3,663.6 616.2,741.8 656.2,763.7 696.1,746.0 736.0,769.0 775.9,752.7 815.9,750.7 855.8,713.4 895.7,687.7 935.7,666.7 975.6,640.2"/>
<g font-size="12.3" fill="#1c2142" text-anchor="end" letter-spacing="-0.45">
<text x="49.2" y="603.3">58</text>
<text x="49.2" y="631.3">57.5</text>
<text x="49.2" y="659.3">57</text>
<text x="49.2" y="687.3">56.5</text>
<text x="49.2" y="715.3">56</text>
<text x="49.2" y="743.3">55.5</text>
<text x="49.2" y="771.3">55</text>
</g>
<g font-size="12.3" fill="#1c2142" text-anchor="middle" letter-spacing="-0.45" clip-path="url(#cx)">
<text x="57.2" y="791">Oct 20 2025, 9:00</text>
<text x="177.0" y="791">12:00</text>
<text x="296.8" y="791">15:00</text>
<text x="416.6" y="791">18:00</text>
<text x="536.4" y="791">21:00</text>
<text x="656.2" y="791">Oct 21, 0:00</text>
<text x="775.9" y="791">3:00</text>
<text x="895.7" y="791">6:00</text>
</g></svg>
  <svg class="abs" style="left:1296px;top:13px" width="22" height="22" viewBox="0 0 22 22"><path d="M4 4 L18 18 M18 4 L4 18" stroke="#fff" stroke-width="1.3" fill="none"/></svg>
</div>

<div id="sidebar"><div class="sel"></div>
  <svg width="45" height="440" viewBox="0 45 45 440">
    <g stroke="#fff" stroke-width="1.3"><path d="M12.4 65.6H29.6M12.4 69.6H29.6M12.4 73.7H29.6"/></g>
    <!-- home -->
    <g fill="none" stroke="#fff" stroke-width="1.9" stroke-linejoin="round" stroke-linecap="round" stroke-linejoin="miter" stroke-linecap="butt"><path d="M11.4 118.6 L21.1 108.6 L30.8 118.6 M13.6 117.2 V124.9 H18.6 V119 H23.6 V124.9 H28.6 V117.2"/></g>
    <!-- map -->
    <g fill="none" stroke="#fff" stroke-width="1.9" stroke-linejoin="round" stroke-linecap="round" stroke-linejoin="miter"><path d="M10.9 158.8 L17.5 156.6 L24.4 158.8 L31 156.6 V170.6 L24.4 172.8 L17.5 170.6 L10.9 172.8 Z M17.5 156.6 V170.6 M24.4 158.8 V172.8"/></g>
    <!-- area chart -->
    <g fill="none" stroke="#fff" stroke-width="1.9" stroke-linejoin="round" stroke-linecap="round" stroke-width="1.6" stroke-linejoin="miter" stroke-linecap="butt"><path d="M12.6 203 V221 H30.8"/><path d="M15.4 217.6 V209.4 L19.6 211.4 L25.8 207.2 L30 212.4 V217.6 Z"/><path d="M16 216 L22 212.6 L26.4 214.6 L29.6 217" stroke-width="1.2"/></g>
    <!-- cloud -->
    <g fill="none" stroke="#fff" stroke-width="1.9" stroke-linejoin="round" stroke-linecap="round" stroke-width="1.8"><path d="M15.3 266.3 H27.3 a4 4 0 0 0 .7 -7.95 a6.1 6.1 0 0 0 -11.7 -1.4 a4.75 4.75 0 0 0 -1 9.35 Z"/></g>
    <!-- trend -->
    <g fill="none" stroke="#fff" stroke-width="1.9" stroke-linejoin="round" stroke-linecap="round" stroke-linejoin="miter" stroke-linecap="butt"><path d="M10.6 315.4 L18.4 307.5 L22.1 311.3 L30.6 302.7"/><path d="M25 301.8 H31.3 V308.2"/></g>
    <!-- volume -->
    <g fill="none" stroke="#fff" stroke-width="1.9" stroke-linejoin="round" stroke-linecap="round" stroke-width="1.7"><path d="M10.8 353.4 H13.8 L18.2 349.6 V364.2 L13.8 360.4 H10.8 Z" stroke-linejoin="miter"/><path d="M21.4 353.9 a4.2 4.2 0 0 1 0 5.9"/><path d="M24.2 351 a8.3 8.3 0 0 1 0 11.7"/><path d="M27.1 348.3 a12.2 12.2 0 0 1 0 17.2"/></g>
    <!-- history -->
    <g fill="none" stroke="#fff" stroke-width="1.9" stroke-linejoin="round" stroke-linecap="round" stroke-width="1.8"><path d="M12 400 A9.8 9.8 0 1 1 11.4 406.6"/><path d="M10.6 396.6 V401.2 H15.4" stroke-linejoin="miter"/><path d="M20.6 398.6 V404.4 L23.6 408.6" stroke-width="1.6"/></g>
    <!-- alarm -->
    <g fill="none" stroke="#fff" stroke-width="1.9" stroke-linejoin="round" stroke-linecap="round" stroke-width="1.8"><circle cx="21.1" cy="453.4" r="8.2"/><path d="M20.6 448.6 V454.2 H24.4" stroke-width="1.6" stroke-linejoin="miter"/><path d="M11.6 449 a4 4 0 0 1 5.4 -5.2 M30.6 449 a4 4 0 0 0 -5.4 -5.2"/><path d="M14.8 459.8 L12.6 462.2 M27.4 459.8 L29.6 462.2"/></g>
  </svg>
</div>
<div id="topbar">
  
  <svg class="abs" style="left:0;top:0" width="45" height="45" viewBox="0 0 45 45"><rect x="12.7" y="13.1" width="3.4" height="3.4" rx=".9" fill="#fff"/><rect x="19.0" y="13.1" width="3.4" height="3.4" rx=".9" fill="#fff"/><rect x="25.2" y="13.1" width="3.4" height="3.4" rx=".9" fill="#fff"/><rect x="12.7" y="19.0" width="3.4" height="3.4" rx=".9" fill="#fff"/><rect x="19.0" y="19.0" width="3.4" height="3.4" rx=".9" fill="#fff"/><rect x="25.2" y="19.0" width="3.4" height="3.4" rx=".9" fill="#fff"/><rect x="12.7" y="24.9" width="3.4" height="3.4" rx=".9" fill="#fff"/><rect x="19.0" y="24.9" width="3.4" height="3.4" rx=".9" fill="#fff"/><rect x="25.2" y="24.9" width="3.4" height="3.4" rx=".9" fill="#fff"/></svg>
  <svg class="abs" style="left:2440px;top:8px" width="26" height="26" viewBox="0 0 26 26" fill="none" stroke="#fff" stroke-width="1.5" stroke-linejoin="round" stroke-linecap="round">
    <path d="M5.2 20.8 L6.6 15.9 L17.4 5.1 a1.9 1.9 0 0 1 2.7 0 l.8 .8 a1.9 1.9 0 0 1 0 2.7 L10.1 19.4 Z"/>
    <path d="M6.6 15.9 L10.1 19.4 M15.9 6.6 l3.5 3.5" stroke-width="1.2"/>
  </svg>
  <svg class="abs" style="left:2478px;top:16px" width="22" height="10" viewBox="0 0 22 10"><rect x="3.7" y="3.8" width="2.3" height="2.3" fill="#fff"/><rect x="9.85" y="3.8" width="2.3" height="2.3" fill="#fff"/><rect x="16" y="3.8" width="2.3" height="2.3" fill="#fff"/></svg>
  <div class="sep"></div>
  <div class="title" id="ttl">ENVIRONMENTAL MONITORING</div>
  <div id="avatar">D</div>
</div>
</body>
</html>
